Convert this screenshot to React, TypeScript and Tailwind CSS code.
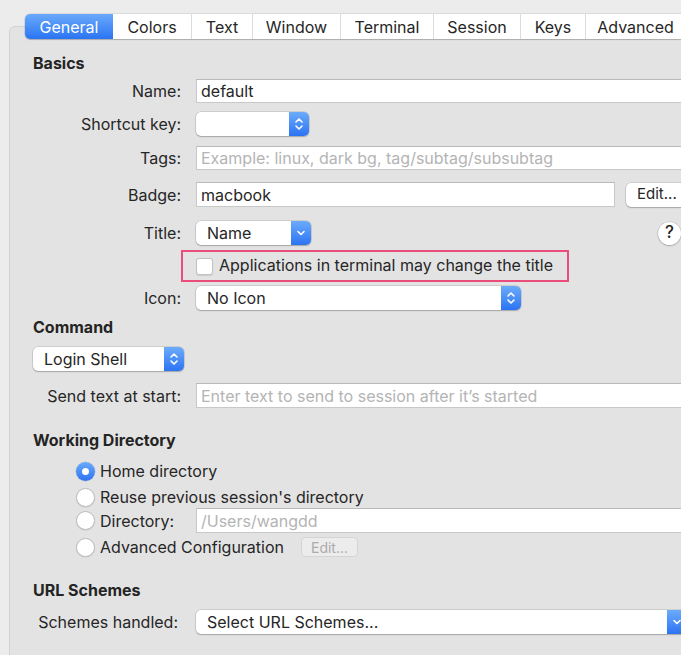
import React from "react";

const UpDown = () => (
  <svg width="10" height="16" viewBox="0 0 10 16" fill="none">
    <path d="M2 6 L5 3 L8 6" stroke="white" strokeWidth="1.6" strokeLinecap="round" strokeLinejoin="round" />
    <path d="M2 10 L5 13 L8 10" stroke="white" strokeWidth="1.6" strokeLinecap="round" strokeLinejoin="round" />
  </svg>
);

const Down = () => (
  <svg width="10" height="10" viewBox="0 0 10 10" fill="none">
    <path d="M2 3.5 L5 6.5 L8 3.5" stroke="white" strokeWidth="1.6" strokeLinecap="round" strokeLinejoin="round" />
  </svg>
);

function Popup({ text, width, single }: { text: string; width: string; single?: boolean }) {
  return (
    <div
      className={`${width} h-[24px] flex items-stretch bg-white rounded-[5px] shadow-[0_0_0_0.5px_rgba(0,0,0,0.18),0_1px_1.5px_rgba(0,0,0,0.2)] shrink-0`}
    >
      <div className="flex-1 pl-[11px] flex items-center leading-none whitespace-nowrap overflow-hidden">{text}</div>
      <div className="w-[20px] rounded-r-[5px] bg-gradient-to-b from-[#6cabfb] to-[#2b73f2] flex items-center justify-center">
        {single ? <Down /> : <UpDown />}
      </div>
    </div>
  );
}

function Field({ width, value, placeholder, h = "h-[24px]" }: { width: string; value?: string; placeholder?: string; h?: string }) {
  return (
    <div
      className={`${width} ${h} bg-white border border-[#c8c8c8] border-t-[#b9b9b9] flex items-center pl-[4px] whitespace-nowrap overflow-hidden shrink-0`}
    >
      {value ? <span>{value}</span> : <span className="text-[#b4b4b4]">{placeholder}</span>}
    </div>
  );
}

function Label({ children, extra = "" }: { children: React.ReactNode; extra?: string }) {
  return <div className={`w-[148px] text-right shrink-0 whitespace-nowrap ${extra}`}>{children}</div>;
}

function Heading({ children, mt }: { children: React.ReactNode; mt: string }) {
  return <div className={`${mt} h-[18px] leading-[18px] text-[16px] font-bold text-[#242424]`}>{children}</div>;
}

function Radio({ on }: { on?: boolean }) {
  return on ? (
    <div className="w-[19px] h-[19px] rounded-full bg-gradient-to-b from-[#6aa9fa] to-[#2c74f2] flex items-center justify-center shrink-0 shadow-[0_0_0_0.5px_rgba(0,0,0,0.15)]">
      <div className="w-[7px] h-[7px] rounded-full bg-white" />
    </div>
  ) : (
    <div className="w-[19px] h-[19px] rounded-full bg-white border border-[#bdbdbd] shrink-0 shadow-[0_0.5px_1px_rgba(0,0,0,0.12)]" />
  );
}

const tabs: [string, string][] = [
  ["General", "w-[88px]"],
  ["Colors", "w-[78px]"],
  ["Text", "w-[61px]"],
  ["Window", "w-[88px]"],
  ["Terminal", "w-[93px]"],
  ["Session", "w-[87px]"],
  ["Keys", "w-[65px]"],
  ["Advanced", "w-[100px]"],
];

export default function App() {
  return (
    <div className="w-[681px] h-[655px] bg-[#ececec] overflow-hidden [font-family:Inter,sans-serif] text-[16px] text-[#262626]">
      <div className="pt-[14px] pl-[25px] relative z-10 flex">
        <div className="flex h-[25px] rounded-[5px] bg-white shadow-[0_0_0_0.5px_rgba(0,0,0,0.15),0_1px_1px_rgba(0,0,0,0.18)] overflow-hidden shrink-0">
          {tabs.map(([t, w], i) => (
            <div
              key={t}
              className={`${w} shrink-0 flex items-center justify-center leading-none ${
                i === 0
                  ? "bg-gradient-to-b from-[#6aa9fa] to-[#2a74f3] text-white"
                  : "text-[#262626] " + (i > 1 ? "border-l border-[#dcdcdc]" : "")
              }`}
            >
              {t}
            </div>
          ))}
        </div>
      </div>
      <div className="ml-[9px] -mt-[13px] w-[720px] h-[700px] bg-[#e3e3e3] border border-[#d2d2d2] rounded-tl-[6px] pt-[27px] pl-[23px] flex flex-col">
        <Heading mt="mt-0">Basics</Heading>

        <div className="mt-[7px] h-[24px] flex items-center gap-[15px]">
          <Label>Name:</Label>
          <Field width="w-[520px]" value="default" />
        </div>

        <div className="mt-[9px] h-[24px] flex items-center gap-[15px]">
          <Label>Shortcut key:</Label>
          <Popup text="" width="w-[113px]" />
        </div>

        <div className="mt-[10px] h-[24px] flex items-center gap-[15px]">
          <Label>Tags:</Label>
          <Field width="w-[520px]" placeholder="Example: linux, dark bg, tag/subtag/subsubtag" />
        </div>

        <div className="mt-[12px] h-[25px] flex items-center gap-[15px]">
          <Label>Badge:</Label>
          <Field width="w-[419px]" h="h-[25px]" value="macbook" />
          <div className="ml-[-4px] w-[66px] h-[24px] bg-white rounded-[5px] shadow-[0_0_0_0.5px_rgba(0,0,0,0.18),0_1px_1.5px_rgba(0,0,0,0.2)] flex items-center pl-[11px] text-[15px] shrink-0">
            Edit...
          </div>
        </div>

        <div className="mt-[14px] h-[24px] flex items-center">
          <Label>Title:</Label>
          <div className="ml-[15px]">
            <Popup text="Name" width="w-[115px]" single />
          </div>
          <div className="ml-[347px] w-[23px] h-[23px] rounded-full bg-white shadow-[0_0_0_0.5px_rgba(0,0,0,0.18),0_1px_1.5px_rgba(0,0,0,0.2)] flex items-center justify-center text-[17px] font-medium shrink-0">
            ?
          </div>
        </div>

        <div className="mt-[5px] ml-[148px] w-[388px] h-[32px] border-2 border-[#ea4d7c] flex items-center pl-[13px] gap-[6px] whitespace-nowrap">
          <div className="w-[17px] h-[17px] bg-white rounded-[3px] border border-[#c2c2c2] shadow-[0_0.5px_1px_rgba(0,0,0,0.1)] shrink-0" />
          <span className="-mt-[2px]">Applications in terminal may change the title</span>
        </div>

        <div className="mt-[4px] h-[24px] flex items-center gap-[15px]">
          <Label>Icon:</Label>
          <Popup text="No Icon" width="w-[325px]" />
        </div>

        <Heading mt="mt-[8px]">Command</Heading>

        <div className="mt-[11px] h-[24px] flex items-center">
          <Popup text="Login Shell" width="w-[151px]" />
        </div>

        <div className="mt-[12px] h-[25px] flex items-center gap-[15px]">
          <Label>Send text at start:</Label>
          <Field width="w-[520px]" h="h-[25px]" placeholder="Enter text to send to session after it’s started" />
        </div>

        <Heading mt="mt-[23px]">Working Directory</Heading>

        <div className="mt-[11px] h-[22px] ml-[43px] flex items-center gap-[5px] whitespace-nowrap">
          <Radio on />
          <span>Home directory</span>
        </div>
        <div className="mt-[4px] h-[22px] ml-[43px] flex items-center gap-[5px] whitespace-nowrap">
          <Radio />
          <span>Reuse previous session's directory</span>
        </div>
        <div className="mt-0 h-[25px] ml-[43px] flex items-center whitespace-nowrap">
          <div className="w-[120px] flex items-center gap-[5px] shrink-0">
            <Radio />
            <span>Directory:</span>
          </div>
          <Field width="w-[520px]" h="h-[25px]" placeholder="/Users/wangdd" />
        </div>
        <div className="mt-[3px] h-[22px] ml-[43px] flex items-center gap-[5px] whitespace-nowrap">
          <Radio />
          <span>Advanced Configuration</span>
          <div className="ml-[12px] w-[57px] h-[20px] rounded-[4px] bg-[#ececec] border border-[#d4d4d4] text-[#ababab] text-[14px] flex items-center justify-center shrink-0">
            Edit...
          </div>
        </div>

        <Heading mt="mt-[23px]">URL Schemes</Heading>

        <div className="mt-[11px] h-[24px] flex items-center gap-[15px]">
          <Label extra="pr-[3px]">Schemes handled:</Label>
          <Popup text="Select URL Schemes..." width="w-[491px]" single />
        </div>
      </div>
    </div>
  );
}
